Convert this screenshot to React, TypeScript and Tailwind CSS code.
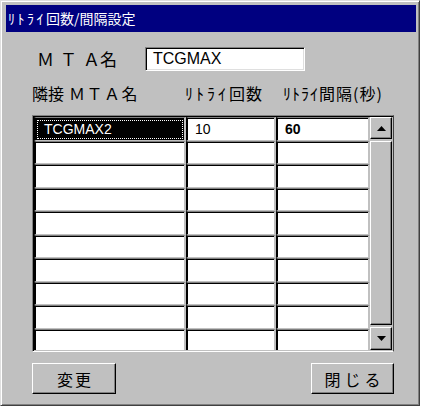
import React from "react";

const jp = "font-['Noto_Sans_CJK_JP',sans-serif]";
const sans = "font-['Liberation_Sans',Arial,sans-serif]";

const raised =
  "bg-[#c0c0c0] border border-t-white border-l-white border-r-black border-b-black shadow-[inset_-1px_-1px_0_#808080]";

function Cell({ w, children, selected, bold }: { w: string; children?: React.ReactNode; selected?: boolean; bold?: boolean }) {
  return (
    <div
      className={`${w} h-full border-l-2 border-l-black border-t border-t-[#808080] border-r-2 border-r-[#c0c0c0] border-b border-b-[#c0c0c0] shadow-[inset_0_1px_0_#000] ${
        selected ? "bg-black" : "bg-white"
      } ${sans} text-[14px] flex items-center`}
    >
      {selected ? (
        <div className="m-[1px] mt-[2px] w-full h-[calc(100%-3px)] border border-dotted border-white text-white pl-[6px] flex items-center">
          {children}
        </div>
      ) : (
        <div className={`pl-[7px] text-black ${bold ? "font-bold" : ""}`}>{children}</div>
      )}
    </div>
  );
}

export default function App() {
  const rows = [24, 23, 24, 23, 24, 23, 24, 23, 24, 23];
  return (
    <div className="w-[422px] h-[409px] bg-white">
      <div
        className={`w-[420px] h-[406px] bg-[#c0c0c0] border border-t-[#dfdfdf] border-l-[#dfdfdf] border-r-[#404040] border-b-[#404040] shadow-[inset_1px_1px_0_#fff,inset_-1px_-1px_0_#808080] pt-[4px] pl-[5px] pr-[3px] flex flex-col ${jp}`}
      >
        <div className="h-[27px] bg-[#000080] text-white text-[14px] leading-[27px] pl-[2px] whitespace-nowrap">
          <span className="tracking-[2.5px]">ﾘﾄﾗｲ</span>
          <span>回数/間隔設定</span>
        </div>
        <div className="pl-[26px] flex flex-col">
          <div className="mt-[15px] h-[24px] flex items-center">
            <div className="w-[113px] pl-[5px] text-[17px] leading-[24px] text-black whitespace-nowrap">
              <span className="tracking-[6px]">ＭＴ</span>
              <span>Ａ名</span>
            </div>
            <div
              className={`w-[160px] h-[24px] bg-white border border-t-[#808080] border-l-[#808080] border-r-white border-b-white shadow-[inset_1px_1px_0_#000,inset_-1px_-1px_0_#dfdfdf] pl-[7px] flex items-center ${sans} text-[16px] text-black`}
            >
              TCGMAX
            </div>
          </div>
          <div className="h-[44px] flex items-center text-[16px] leading-[18px] text-black whitespace-nowrap">
            <div className="w-[153px]">
              <span>隣接</span>
              <span className="ml-[5px] tracking-[1.5px]">ＭＴＡ名</span>
            </div>
            <div className="w-[98px]">
              <span className="tracking-[3px]">ﾘﾄﾗｲ</span>
              <span className="tracking-[1px]">回数</span>
            </div>
            <div>
              <span className="tracking-[1px]">ﾘﾄﾗｲ間隔(秒)</span>
            </div>
          </div>
          <div className="w-[362px] h-[237px] border border-t-[#808080] border-l-[#808080] border-r-[#404040] border-b-white shadow-[inset_1px_1px_0_#000] p-[1px] pb-0 pr-0 flex">
            <div className="w-[336px] h-[233px] overflow-hidden flex flex-col">
              {rows.map((h, i) => (
                <div key={i} className="flex shrink-0" style={{ height: h }}>
                  <Cell w="w-[152px]" selected={i === 0}>
                    {i === 0 ? "TCGMAX2" : null}
                  </Cell>
                  <Cell w="w-[90px]">{i === 0 ? "10" : null}</Cell>
                  <Cell w="w-[94px]" bold>
                    {i === 0 ? "60" : null}
                  </Cell>
                </div>
              ))}
            </div>
            <div className="w-[22px] h-[233px] flex flex-col gap-[2px] bg-[#c0c0c0]">
              <div className={`h-[22px] ${raised} flex items-center justify-center`}>
                <svg width="9" height="5" viewBox="0 0 9 5">
                  <polygon points="4.5,0 9,5 0,5" fill="#000" />
                </svg>
              </div>
              <div className={`flex-1 ${raised}`} />
              <div className={`h-[23px] ${raised} flex items-center justify-center`}>
                <svg width="9" height="5" viewBox="0 0 9 5">
                  <polygon points="0,0 9,0 4.5,5" fill="#000" />
                </svg>
              </div>
            </div>
          </div>
          <div className="mt-[11px] w-[362px] flex justify-between text-[16px] text-black">
            <div className={`w-[84px] h-[31px] ${raised} flex items-center justify-center`}>
              <span className="tracking-[2px] pl-[2px]">変更</span>
            </div>
            <div className={`w-[83px] h-[31px] ${raised} flex items-center justify-center`}>
              <span className="tracking-[4px] pl-[4px]">閉じる</span>
            </div>
          </div>
        </div>
      </div>
    </div>
  );
}
